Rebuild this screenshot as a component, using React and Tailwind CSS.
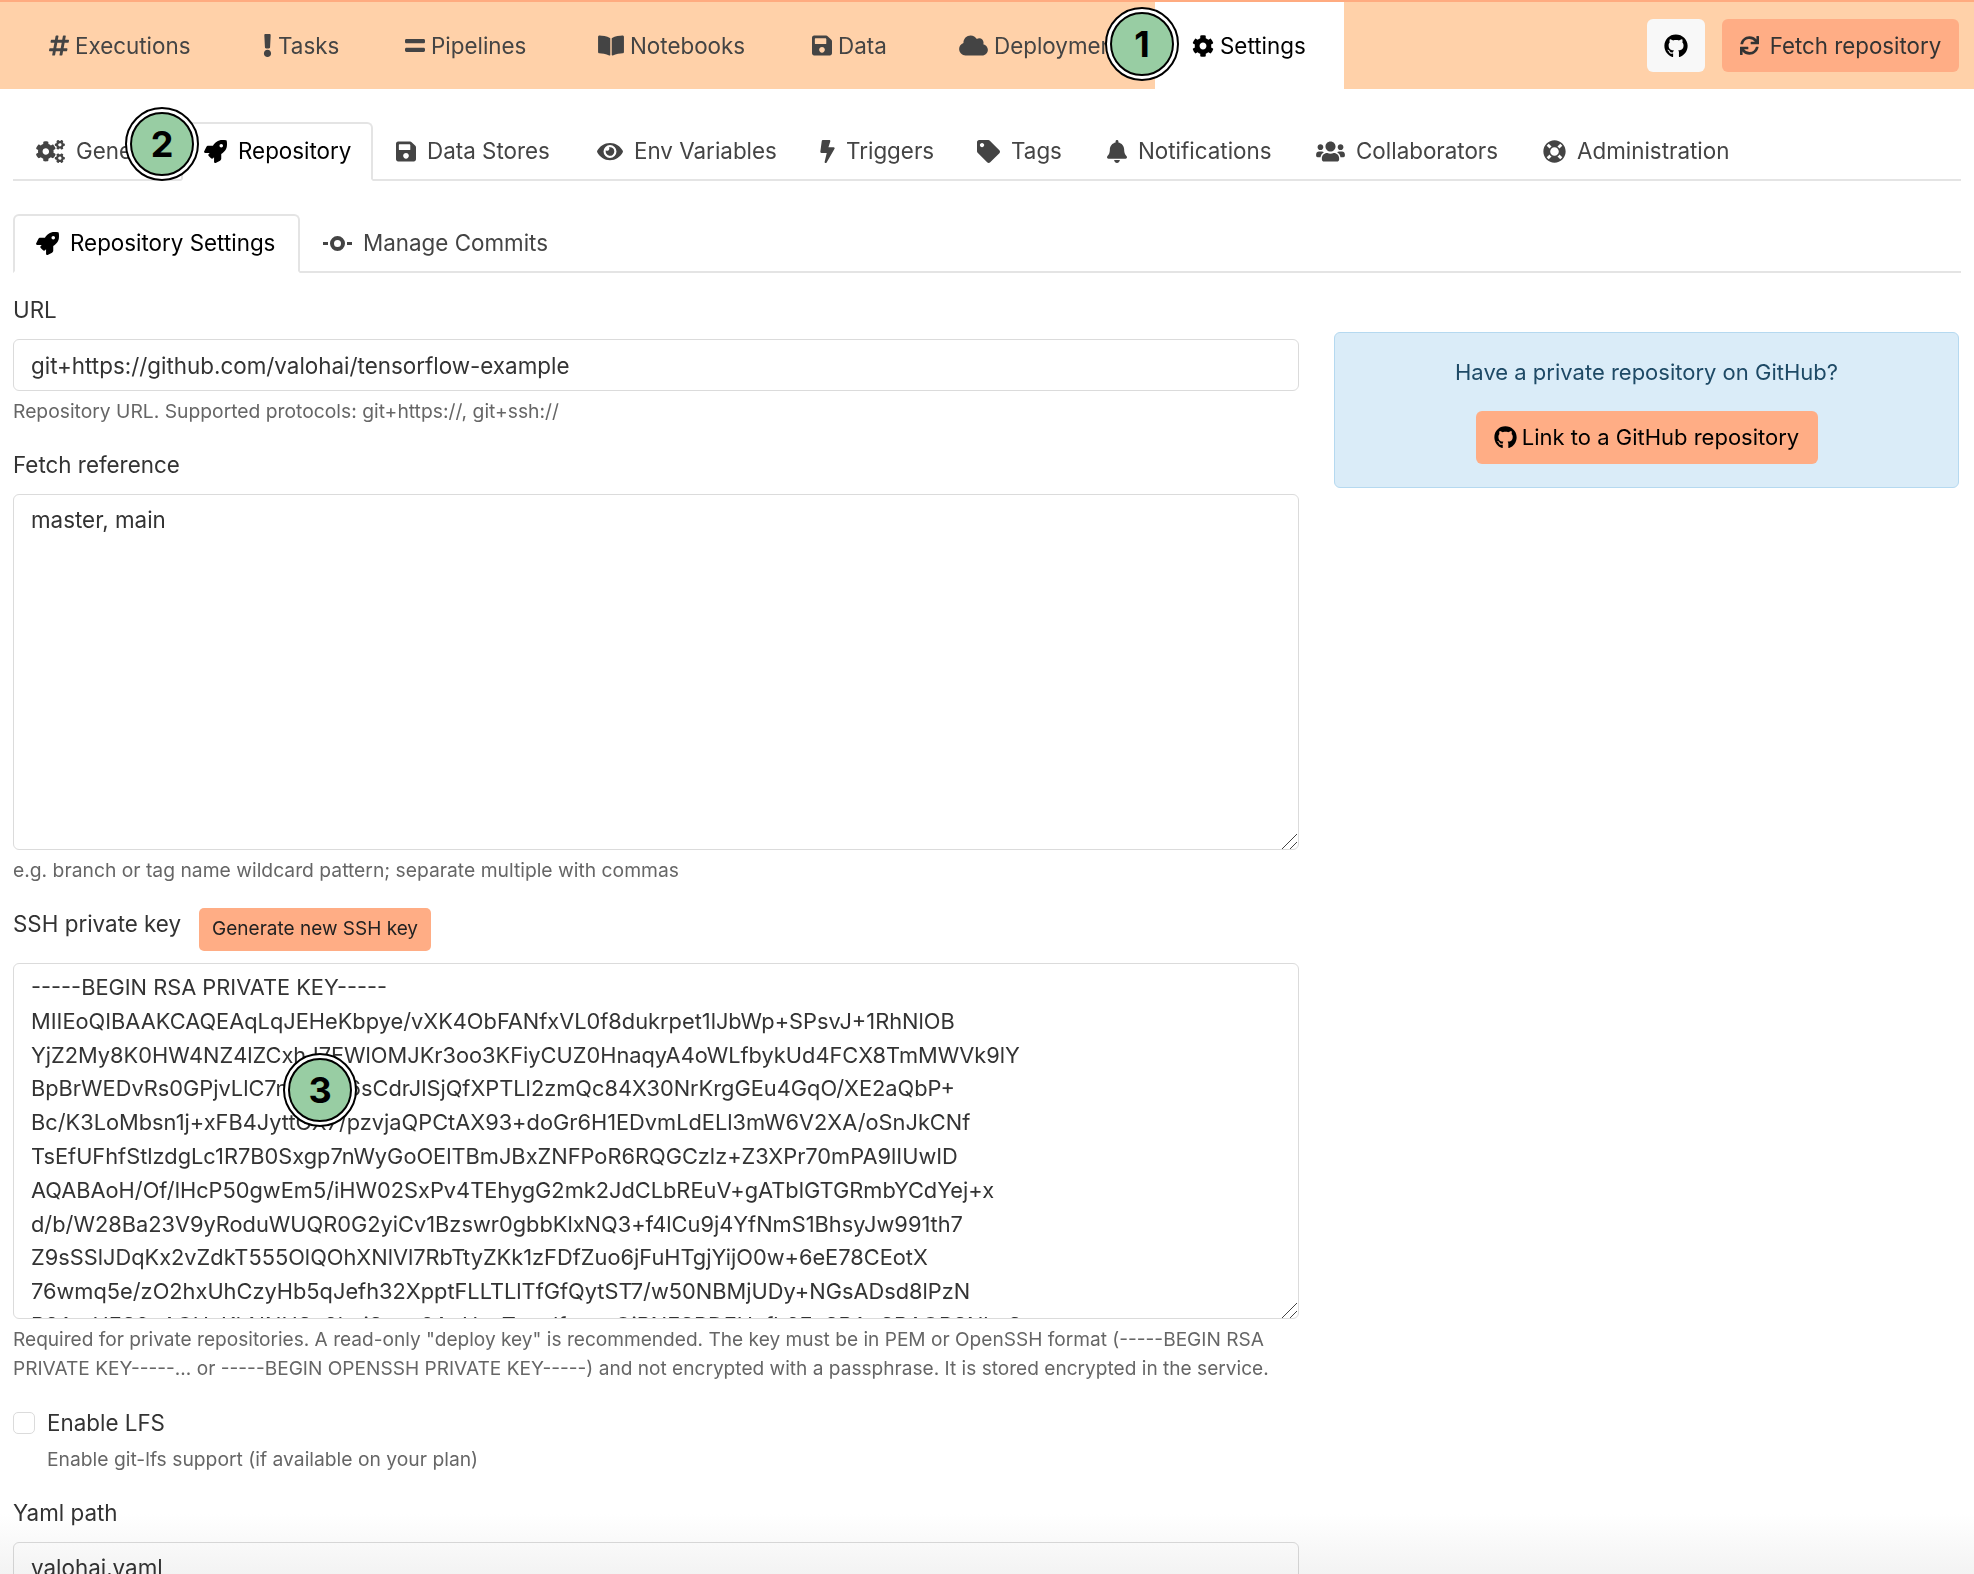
import React from "react";
import {
  FaHashtag, FaExclamation, FaEquals, FaBookOpen, FaSave, FaCloud, FaCog, FaCogs, FaGithub, FaSync,
  FaRocket, FaEye, FaBolt, FaTag, FaBell, FaUsers, FaLifeRing,
} from "react-icons/fa";

const sshKey = `-----BEGIN RSA PRIVATE KEY-----
MIIEoQIBAAKCAQEAqLqJEHeKbpye/vXK4ObFANfxVL0f8dukrpet1lJbWp+SPsvJ+1RhNlOB
YjZ2My8K0HW4NZ4lZCxhJ7EWlOMJKr3oo3KFiyCUZ0HnaqyA4oWLfbykUd4FCX8TmMWVk9lY
BpBrWEDvRs0GPjvLlC7nWk2b6sCdrJlSjQfXPTLl2zmQc84X30NrKrgGEu4GqO/XE2aQbP+
Bc/K3LoMbsn1j+xFB4JyttGX7/pzvjaQPCtAX93+doGr6H1EDvmLdELl3mW6V2XA/oSnJkCNf
TsEfUFhfStlzdgLc1R7B0Sxgp7nWyGoOElTBmJBxZNFPoR6RQGCzlz+Z3XPr70mPA9lIUwID
AQABAoH/Of/lHcP50gwEm5/iHW02SxPv4TEhygG2mk2JdCLbREuV+gATblGTGRmbYCdYej+x
d/b/W28Ba23V9yRoduWUQR0G2yiCv1Bzswr0gbbKlxNQ3+f4lCu9j4YfNmS1BhsyJw991th7
Z9sSSlJDqKx2vZdkT555OlQOhXNlVl7RbTtyZKk1zFDfZuo6jFuHTgjYijO0w+6eE78CEotX
76wmq5e/zO2hxUhCzyHb5qJefh32XpptFLLTLlTfGfQytST7/w50NBMjUDy+NGsADsd8lPzN
R3AmUFS9nAGHaKhNNHSe2huiSoxp8AoHnxTpwdfqwwQiRNFSPDEUafh2FnSRAcSRAOPSNhsS`;

const navItems = [
  { label: "Executions", icon: FaHashtag, iconWidth: "w-[20px]", width: "w-[214px]" },
  { label: "Tasks", icon: FaExclamation, iconWidth: "w-[9px]", width: "w-[142px]" },
  { label: "Pipelines", icon: FaEquals, iconWidth: "w-[20px]", width: "w-[193px]" },
  { label: "Notebooks", icon: FaBookOpen, iconWidth: "w-[26px]", width: "w-[214px]" },
  { label: "Data", icon: FaSave, iconWidth: "w-[20px]", width: "w-[147px]" },
  { label: "Deployments", icon: FaCloud, iconWidth: "w-[29px]", width: "w-[232px]" },
];

const tabs = [
  { label: "General", icon: FaCogs, iconWidth: "w-[29px]", width: "w-[168px]" },
  { label: "Repository", icon: FaRocket, iconWidth: "w-[23px]", width: "w-[192px]", active: true },
  { label: "Data Stores", icon: FaSave, iconWidth: "w-[20px]", width: "w-[201px]" },
  { label: "Env Variables", icon: FaEye, iconWidth: "w-[26px]", width: "w-[223px]" },
  { label: "Triggers", icon: FaBolt, iconWidth: "w-[15px]", width: "w-[157px]" },
  { label: "Tags", icon: FaTag, iconWidth: "w-[23px]", width: "w-[130px]" },
  { label: "Notifications", icon: FaBell, iconWidth: "w-[20px]", width: "w-[209px]" },
  { label: "Collaborators", icon: FaUsers, iconWidth: "w-[29px]", width: "w-[227px]" },
  { label: "Administration", icon: FaLifeRing, iconWidth: "w-[23px]", width: "w-[235px]" },
];

function Badge({ n, className }) {
  return (
    <div className={`absolute z-20 h-[74px] w-[74px] rounded-full border-2 border-black bg-white p-[3px] ${className}`}>
      <div className="flex h-full w-full items-center justify-center rounded-full border-2 border-black bg-[#98cda3] text-[36px] font-bold text-black">
        {n}
      </div>
    </div>
  );
}

function Help({ children, className = "" }) {
  return <p className={`mt-[5px] text-[19.3px] leading-[30px] text-[#666] ${className}`}>{children}</p>;
}

function Label({ children, className = "" }) {
  return <label className={`block text-[22.4px] leading-[34px] text-[#333] ${className}`}>{children}</label>;
}

function ResizeHandle() {
  return (
    <svg className="absolute bottom-[1px] right-[2px] h-[15px] w-[15px]" viewBox="0 0 15 15" stroke="#444" strokeWidth="1" fill="none">
      <path d="M15 0 L0 15 M15 8 L8 15" />
    </svg>
  );
}

function CommitIcon() {
  return (
    <svg className="h-[23px] w-[29px]" viewBox="0 0 29 23" fill="none" stroke="currentColor">
      <circle cx="14.5" cy="11.5" r="5.5" strokeWidth="4" />
      <path d="M0 11.5 H5 M24 11.5 H29" strokeWidth="3" />
    </svg>
  );
}

const fieldClass =
  "block w-full rounded-[6px] border border-[#dbdbdb] bg-white px-[17px] leading-[33.8px] text-[#333] outline-none";

export default function App() {
  return (
    <div className="relative h-[1574px] overflow-hidden bg-white font-['Inter','Noto_Sans',sans-serif]">
      <Badge n="1" className="left-[1105px] top-[7px]" />
      <Badge n="2" className="left-[125px] top-[107px]" />
      <Badge n="3" className="left-[283px] top-[1053px]" />

      {/* top bar */}
      <header className="flex h-[89px] items-stretch justify-between border-t-2 border-[#ffab80] bg-[#ffd1a9] pl-[13px] pr-[15px]">
        <nav className="flex items-stretch">
          {navItems.map((item) => (
            <a key={item.label} className={`flex items-center gap-[6px] whitespace-nowrap pl-[36px] text-[22.4px] text-[#444] ${item.width}`}>
              <item.icon className={`h-[23px] shrink-0 ${item.iconWidth}`} />
              {item.label}
            </a>
          ))}
          <a className="flex w-[189px] items-center gap-[6px] bg-white pl-[37px] text-[22.4px] text-black">
            <FaCog className="h-[22px] w-[22px] shrink-0" />
            Settings
          </a>
        </nav>
        <div className="flex items-center gap-[17px]">
          <button className="flex h-[53px] w-[58px] items-center justify-center rounded-[6px] bg-[#f8f8f8] text-black">
            <FaGithub className="h-[24px] w-[24px]" />
          </button>
          <button className="flex h-[53px] w-[237px] items-center justify-center gap-[11px] rounded-[6px] bg-[#ffad85] text-[22.3px] text-[#333]">
            <FaSync className="h-[19px] w-[19px]" />
            Fetch repository
          </button>
        </div>
      </header>

      <main className="px-[13px]">
        {/* main tabs */}
        <div className="mt-[33px] flex border-b-2 border-[#e4e4e4]">
          {tabs.map((tab) => (
            <a
              key={tab.label}
              className={`-mb-[2px] flex h-[59px] items-center gap-[11px] whitespace-nowrap rounded-t-[6px] border-2 pb-[1px] pl-[21px] text-[22.4px] ${tab.width} ${
                tab.active ? "border-[#e4e4e4] border-b-white text-black" : "border-transparent text-[#444]"
              }`}
            >
              <tab.icon className={`h-[23px] shrink-0 ${tab.iconWidth}`} />
              {tab.label}
            </a>
          ))}
        </div>

        {/* sub tabs */}
        <div className="mt-[33px] flex border-b-2 border-[#e4e4e4]">
          <a className="-mb-[2px] flex h-[59px] w-[287px] items-center gap-[11px] whitespace-nowrap rounded-t-[6px] border-2 border-[#e4e4e4] border-b-white pb-[1px] pl-[21px] text-[22.4px] text-black">
            <FaRocket className="h-[23px] w-[23px] shrink-0" />
            Repository Settings
          </a>
          <a className="-mb-[2px] flex h-[59px] items-center gap-[11px] whitespace-nowrap border-2 border-transparent px-[21px] pb-[1px] text-[22.4px] text-[#444]">
            <CommitIcon />
            Manage Commits
          </a>
        </div>

        <div className="grid grid-cols-[1286px_625px] gap-[35px]">
          <form className="pt-[20px]">
            <Label>URL</Label>
            <input readOnly value="git+https://github.com/valohai/tensorflow-example" className={`mt-[12px] h-[52px] text-[22.4px] ${fieldClass}`} />
            <Help>Repository URL. Supported protocols: git+https://, git+ssh://</Help>

            <Label className="mt-[22px]">Fetch reference</Label>
            <div className="relative mt-[12px]">
              <textarea readOnly value="master, main" className={`h-[356px] resize-none overflow-hidden py-[8px] text-[22.4px] ${fieldClass}`} />
              <ResizeHandle />
            </div>
            <Help>e.g. branch or tag name wildcard pattern; separate multiple with commas</Help>

            <div className="mt-[23px] flex items-start gap-[18px]">
              <Label className="mt-[-1px]">SSH private key</Label>
              <button type="button" className="h-[43px] w-[232px] rounded-[5px] bg-[#ffad85] text-[19px] text-[#222]">
                Generate new SSH key
              </button>
            </div>
            <div className="relative mt-[12px]">
              <textarea readOnly value={sshKey} wrap="off" className={`h-[356px] resize-none overflow-hidden pb-[8px] pt-[7px] text-[21.8px] ${fieldClass}`} />
              <ResizeHandle />
            </div>
            <p className="mt-[6px] text-[19.1px] leading-[29.4px] text-[#666]">
              Required for private repositories. A read-only "deploy key" is recommended. The key must be in PEM or OpenSSH format (-----BEGIN RSA
              <br />
              PRIVATE KEY-----... or -----BEGIN OPENSSH PRIVATE KEY-----) and not encrypted with a passphrase. It is stored encrypted in the service.
            </p>

            <div className="mt-[22px] flex items-center gap-[12px]">
              <span className="h-[22px] w-[22px] rounded-[5px] border border-[#dbdbdb] bg-white" />
              <span className="text-[22.4px] leading-[34px] text-[#333]">Enable LFS</span>
            </div>
            <p className="mt-[4px] pl-[34px] text-[19.3px] leading-[30px] text-[#666]">Enable git-lfs support (if available on your plan)</p>

            <Label className="mt-[22px]">Yaml path</Label>
            <input readOnly value="valohai.yaml" className={`mt-[12px] h-[52px] text-[22.4px] ${fieldClass}`} />
          </form>

          <aside className="pt-[59px]">
            <div className="flex h-[156px] flex-col items-center rounded-[6px] border border-[#b5d9f0] bg-[#daecf8] pt-[22px]">
              <p className="text-[22px] leading-[34px] text-[#1e4a66]">Have a private repository on GitHub?</p>
              <button className="mt-[22px] flex h-[53px] w-[342px] items-center justify-center gap-[5px] rounded-[6px] bg-[#ffad85] text-[22px] text-black">
                <FaGithub className="h-[23px] w-[23px]" />
                Link to a GitHub repository
              </button>
            </div>
          </aside>
        </div>
      </main>

      {/* fade at the bottom edge */}
      <div className="pointer-events-none absolute inset-x-0 bottom-0 z-10 h-[60px] bg-gradient-to-b from-white to-[#f3f3f3] mix-blend-multiply" />
    </div>
  );
}
